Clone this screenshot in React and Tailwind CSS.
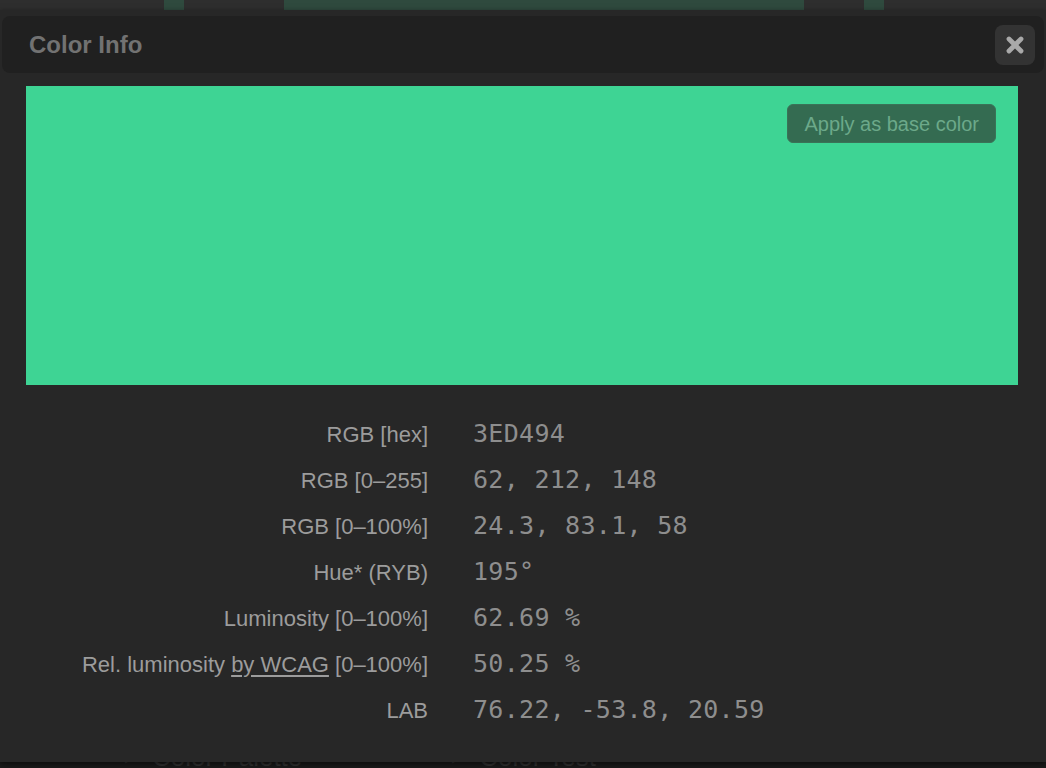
import React from "react";

const rows = [
  { label: <>RGB [hex]</>, value: "3ED494" },
  { label: <>RGB [0–255]</>, value: "62, 212, 148" },
  { label: <>RGB [0–100%]</>, value: "24.3, 83.1, 58" },
  { label: <>Hue* (RYB)</>, value: "195°" },
  { label: <>Luminosity [0–100%]</>, value: "62.69 %" },
  {
    label: (
      <>
        Rel. luminosity <span className="underline underline-offset-[3px]">by WCAG</span> [0–100%]
      </>
    ),
    value: "50.25 %",
  },
  { label: <>LAB</>, value: "76.22, -53.8, 20.59" },
];

export default function App() {
  return (
    <div
      className="relative w-[1046px] h-[768px] overflow-hidden bg-[#1b1b1b]"
      style={{ fontFamily: '"Liberation Sans", Arial, sans-serif' }}
    >
      {/* page behind the dialog */}
      <div className="flex flex-col h-full">
        <div className="h-[10px] bg-[#2e2e2e] flex">
          <div className="w-[164px]" />
          <div className="w-[20px] bg-[#2f4a3e]" />
          <div className="w-[100px]" />
          <div className="w-[520px] bg-[#2f4a3e]" />
          <div className="w-[60px]" />
          <div className="w-[20px] bg-[#2f4a3e]" />
        </div>
        <div className="flex-1" />
        <div className="h-[24px] flex items-start text-[26px] text-[#333] leading-none">
          <span className="ml-[125px] text-[20px]">▶</span>
          <span className="ml-[12px]">Color Palette</span>
          <span className="ml-[150px] text-[20px]">▶</span>
          <span className="ml-[12px]">Color Test</span>
        </div>
      </div>

      {/* dialog */}
      <div className="absolute left-0 right-0 top-[10px] h-[752px] bg-[#272727] shadow-[0_2px_6px_rgba(0,0,0,0.6)] flex flex-col">
        <div className="mx-[2px] mt-[6px] h-[57px] rounded-[8px] bg-[#202020] flex items-center justify-between pl-[27px] pr-[9px]">
          <span className="text-[24px] font-bold text-[#727272]">Color Info</span>
          <button className="w-[40px] h-[40px] rounded-[8px] bg-[#333333] flex items-center justify-center">
            <svg width="20" height="20" viewBox="0 0 20 20">
              <path
                d="M4 4 L16 16 M16 4 L4 16"
                stroke="#a9a9a9"
                strokeWidth="4.8"
                strokeLinecap="round"
              />
            </svg>
          </button>
        </div>

        <div className="ml-[26px] mt-[13px] w-[992px] h-[299px] bg-[#3ED494] flex justify-end items-start pt-[18px] pr-[22px]">
          <button className="h-[39px] px-[16px] rounded-[6px] bg-[#346b51] border border-[#3a7358] text-[#6ca98a] text-[20px] leading-none">
            Apply as base color
          </button>
        </div>

        <div className="mt-[26px] grid grid-cols-[428px_1fr] gap-x-[45px]">
          {rows.map((r, i) => (
            <React.Fragment key={i}>
              <div className="h-[46px] flex items-center justify-end text-[22px] text-[#9c9c9c] whitespace-nowrap">
                <span>{r.label}</span>
              </div>
              <div
                className="h-[46px] flex items-center text-[25px] text-[#8e8e8e] tracking-[0.3px] whitespace-pre"
                style={{ fontFamily: '"DejaVu Sans Mono", "Liberation Mono", monospace' }}
              >
                {r.value}
              </div>
            </React.Fragment>
          ))}
        </div>
      </div>
    </div>
  );
}
